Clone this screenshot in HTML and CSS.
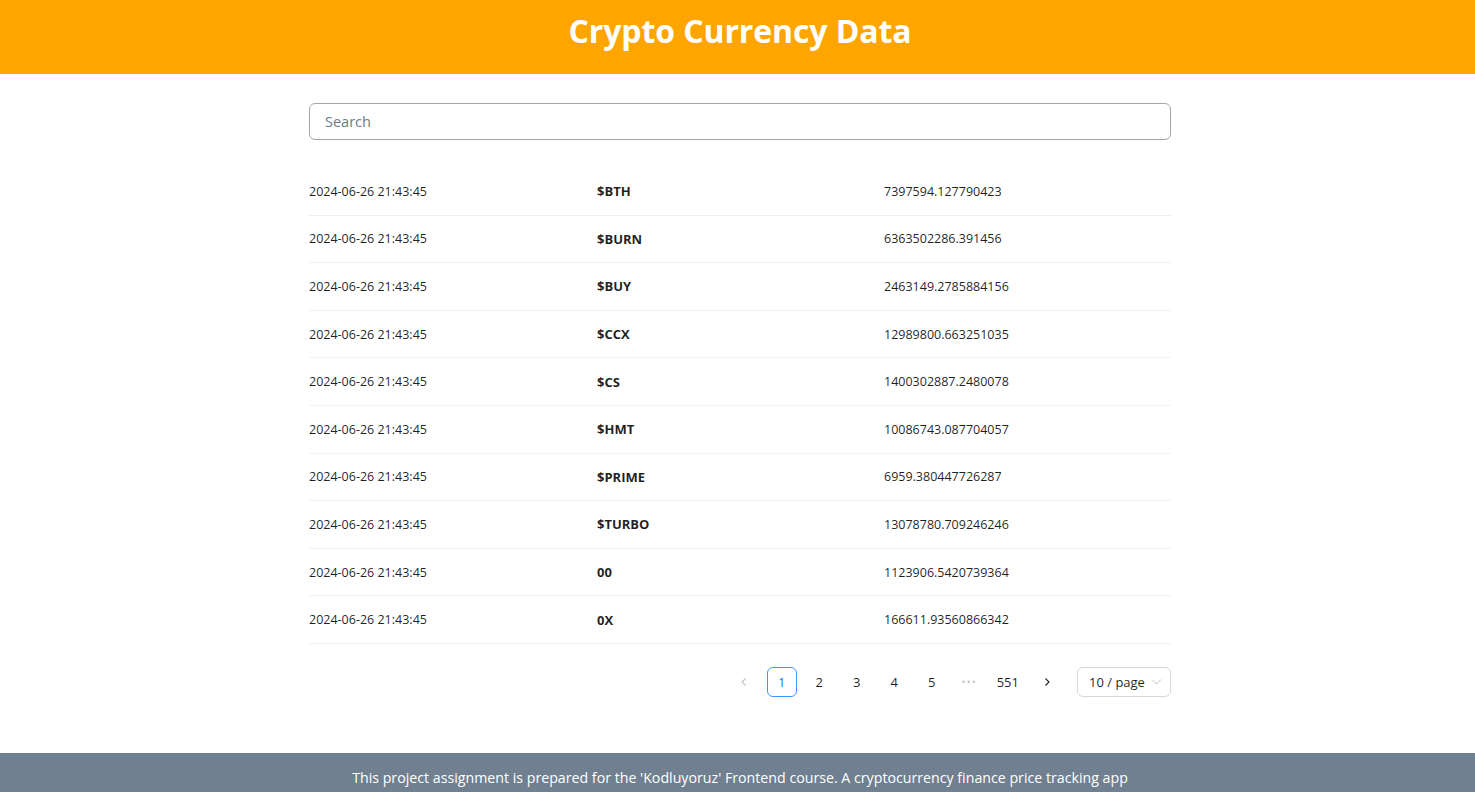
FILE: index.html
```html
<!DOCTYPE html>
<html lang="en">
<head>
<meta charset="utf-8">
<title>Crypto Currency Data</title>
<link rel="stylesheet" href="styles.css">
</head>
<body>
<header class="header">
  <h1 class="title">Crypto Currency Data</h1>
</header>
<main class="main">
  <input class="search" type="text" placeholder="Search">
  <div class="table">
    <div class="row"><span class="cell date">2024-06-26 21:43:45</span><span class="cell name">$BTH</span><span class="cell price">7397594.127790423</span></div>
    <div class="row"><span class="cell date">2024-06-26 21:43:45</span><span class="cell name">$BURN</span><span class="cell price">6363502286.391456</span></div>
    <div class="row"><span class="cell date">2024-06-26 21:43:45</span><span class="cell name">$BUY</span><span class="cell price">2463149.2785884156</span></div>
    <div class="row"><span class="cell date">2024-06-26 21:43:45</span><span class="cell name">$CCX</span><span class="cell price">12989800.663251035</span></div>
    <div class="row"><span class="cell date">2024-06-26 21:43:45</span><span class="cell name">$CS</span><span class="cell price">1400302887.2480078</span></div>
    <div class="row"><span class="cell date">2024-06-26 21:43:45</span><span class="cell name">$HMT</span><span class="cell price">10086743.087704057</span></div>
    <div class="row"><span class="cell date">2024-06-26 21:43:45</span><span class="cell name">$PRIME</span><span class="cell price">6959.380447726287</span></div>
    <div class="row"><span class="cell date">2024-06-26 21:43:45</span><span class="cell name">$TURBO</span><span class="cell price">13078780.709246246</span></div>
    <div class="row"><span class="cell date">2024-06-26 21:43:45</span><span class="cell name">00</span><span class="cell price">1123906.5420739364</span></div>
    <div class="row"><span class="cell date">2024-06-26 21:43:45</span><span class="cell name">0X</span><span class="cell price">166611.93560866342</span></div>
  </div>
  <nav class="pagination">
    <span class="pg-item pg-arrow disabled"><svg width="10" height="10" viewBox="0 0 10 10"><path d="M6.5 1.5 3 5l3.5 3.5" fill="none" stroke="currentColor" stroke-width="1.1"/></svg></span>
    <span class="pg-item active">1</span>
    <span class="pg-item">2</span>
    <span class="pg-item">3</span>
    <span class="pg-item">4</span>
    <span class="pg-item">5</span>
    <span class="pg-item pg-dots">&bull;&bull;&bull;</span>
    <span class="pg-item">551</span>
    <span class="pg-item pg-arrow"><svg width="10" height="10" viewBox="0 0 10 10"><path d="M3.5 1.5 7 5 3.5 8.5" fill="none" stroke="currentColor" stroke-width="1.1"/></svg></span>
    <span class="pg-size">10 / page<svg class="chev" width="11" height="11" viewBox="0 0 11 11"><path d="M1 3.5l4.5 4.5L10 3.5" fill="none" stroke="currentColor" stroke-width="1"/></svg></span>
  </nav>
</main>
<footer class="footer">
  <p class="footer-text">This project assignment is prepared for the 'Kodluyoruz' Frontend course. A cryptocurrency finance price tracking app</p>
</footer>
</body>
</html>
```
FILE: styles.css
```css
* { box-sizing: border-box; }
html, body { margin: 0; padding: 0; }
body {
  font-family: "Open Sans", "Noto Sans", sans-serif;
  color: rgba(0,0,0,0.88);
  background: #fff;
}
.header {
  background: #ffa500;
  height: 74px;
  display: flex;
  align-items: center;
  justify-content: center;
  padding: 0 0 14px 5px;
}
.title {
  margin: 0;
  color: #fff;
  font-size: 32px;
  font-weight: 700;
  letter-spacing: -0.1px;
}
.main {
  width: 862px;
  margin-left: calc(50% - 428.5px);
  padding-top: 29px;
  padding-bottom: 56px;
}
.search {
  display: block;
  width: 100%;
  height: 37px;
  border: 1px solid #a6a6a6;
  border-radius: 6px;
  padding: 0 15px;
  font-family: inherit;
  font-size: 14.5px;
  color: #333;
  outline: none;
}
.search::placeholder { color: #6c7a91; }
.table { margin-top: 28px; }
.row {
  display: grid;
  grid-template-columns: 288px 287px 1fr;
  height: 47.6px;
  align-items: center;
  border-bottom: 1px solid #f0f0f0;
  font-size: 12.5px;
}
.cell { white-space: nowrap; }
.name { font-weight: 700; font-size: 13px; }
.pagination {
  display: flex;
  justify-content: flex-end;
  align-items: center;
  margin-top: 23px;
  gap: 7.5px;
  font-size: 13px;
}
.pg-item {
  min-width: 30px;
  height: 30px;
  padding: 0 4px;
  display: flex;
  align-items: center;
  justify-content: center;
  border: 1px solid transparent;
  border-radius: 6px;
  color: rgba(0,0,0,0.88);
}
.pg-arrow { color: rgba(0,0,0,0.88); }
.pg-arrow.disabled { color: rgba(0,0,0,0.25); }
.pg-item.active {
  border-color: #4096ff;
  color: #1677ff;
}
.pg-dots {
  padding: 0;
  color: rgba(0,0,0,0.25);
  letter-spacing: 1px;
  font-size: 11px;
}
.pg-size {
  margin-left: 8px;
  width: 94px;
  height: 30px;
  display: flex;
  align-items: center;
  justify-content: space-between;
  padding: 0 8px 0 11px;
  border: 1px solid #d9d9d9;
  border-radius: 6px;
}
.chev { color: rgba(0,0,0,0.25); }
.footer {
  background: #708090;
  height: 80px;
  padding: 15px 0 0 5px;
}
.footer-text {
  margin: 0;
  text-align: center;
  color: #fff;
  font-size: 14.2px;
}
```
